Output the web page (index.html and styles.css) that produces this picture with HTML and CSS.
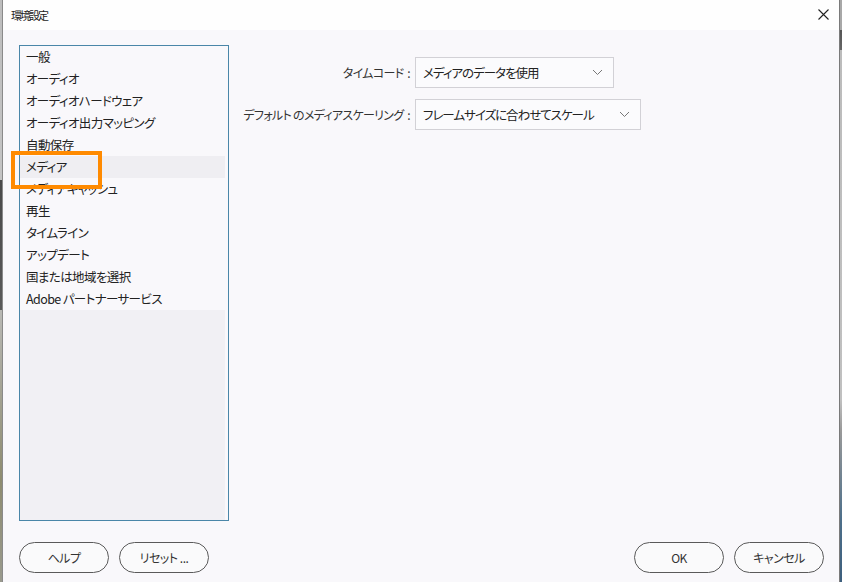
FILE: index.html
```html
<!DOCTYPE html>
<html lang="ja">
<head>
    <meta charset="UTF-8">
    <title>環境設定</title>
    <link rel="stylesheet" href="styles.css">
</head>
<body>
    <div class="desk left"></div>
    <div class="dialog">
        <div class="titlebar">
            <span class="title">環境設定</span>
            <svg class="close" width="11" height="11" viewBox="0 0 11 11">
                <path d="M0.5 0.5 L10.5 10.5 M10.5 0.5 L0.5 10.5" stroke="#222" stroke-width="1.1" fill="none"/>
            </svg>
        </div>
        <div class="main">
            <div class="listbox">
                <ul class="items">
                    <li>一般</li>
                    <li>オーディオ</li>
                    <li>オーディオハードウェア</li>
                    <li>オーディオ出力マッピング</li>
                    <li>自動保存</li>
                    <li class="selected">メディア</li>
                    <li>メディアキャッシュ</li>
                    <li>再生</li>
                    <li>タイムライン</li>
                    <li>アップデート</li>
                    <li>国または地域を選択</li>
                    <li>Adobe パートナーサービス</li>
                </ul>
                <div class="filler"></div>
            </div>
            <div class="form">
                <label>タイムコード&nbsp; :</label>
                <div class="select narrow">
                    <span>メディアのデータを使用</span>
                    <svg width="11" height="7" viewBox="0 0 11 7"><path d="M1 1 L5.5 5.5 L10 1" stroke="#777" fill="none"/></svg>
                </div>
                <label>デフォルト のメディアスケーリング&nbsp; :</label>
                <div class="select wide">
                    <span>フレームサイズに合わせてスケール</span>
                    <svg width="11" height="7" viewBox="0 0 11 7"><path d="M1 1 L5.5 5.5 L10 1" stroke="#777" fill="none"/></svg>
                </div>
            </div>
            <div class="highlight"></div>
        </div>
        <div class="footer">
            <div class="group">
                <button class="btn">ヘルプ</button>
                <button class="btn">リセット ...</button>
            </div>
            <div class="group">
                <button class="btn">OK</button>
                <button class="btn">キャンセル</button>
            </div>
        </div>
    </div>
    <div class="desk right"></div>
</body>
</html>
```

FILE: styles.css
```css
body {
    margin: 0;
    width: 842px;
    height: 582px;
    display: flex;
    font-family: "Noto Sans CJK JP", "Noto Sans", sans-serif;
    font-feature-settings: "palt";
    color: #222;
    overflow: hidden;
}

.desk {
    width: 2px;
    flex: none;
}

.desk.left {
    background: linear-gradient(to bottom, #bdbdbd 0, #c4c4c4 180px, #4a4a4a 180px, #5a5a5a 310px, #b9b9b5 310px, #8e8c70 480px, #9a9a8e 582px);
    border-right: 1px solid #8a8a8a;
}

.desk.right {
    background: linear-gradient(to bottom, #a8a8a8 0, #a8a8a8 30px, #555 30px, #666 50px, #bcbcbc 50px, #c0c0c0 400px, #9a9a9a 430px, #4d6f8a 520px, #3d5f7d 582px);
    border-left: 1px solid #7a7a7a;
}

.dialog {
    width: 836px;
    background: #f9f8fb;
    display: flex;
    flex-direction: column;
}

.titlebar {
    height: 30px;
    background: #fefefe;
    display: flex;
    align-items: center;
    justify-content: space-between;
    padding: 0 10px 0 8px;
}

.title {
    font-size: 11px;
    letter-spacing: -2px;
    margin-top: -1px;
}

.close {
    margin-top: -2px;
}

.main {
    position: relative;
    display: flex;
    padding: 15px 0 0 16px;
}

.listbox {
    width: 208px;
    height: 474px;
    border: 1px solid #4a86a8;
    display: flex;
    flex-direction: column;
    background: #f9f8fb;
}

.items {
    list-style: none;
    margin: 0;
    padding: 0;
}

.items li {
    height: 22px;
    line-height: 22px;
    font-size: 12.5px;
    letter-spacing: -0.6px;
    padding-left: 6px;
    margin-right: 3px;
    white-space: nowrap;
}

.items li.selected {
    background: #efeef2;
}

.filler {
    flex: 1;
    background: #f1f0f4;
    margin-right: 3px;
}

.form {
    display: grid;
    grid-template-columns: 168px auto;
    column-gap: 5px;
    row-gap: 11px;
    align-items: center;
    align-content: start;
    margin: 12px 0 0 13px;
}

.form label {
    font-size: 12px;
    letter-spacing: -0.7px;
    text-align: right;
    white-space: nowrap;
    color: #333;
}

.select {
    height: 31px;
    border: 1px solid #d2d1d6;
    background: #fbfbfd;
    display: flex;
    align-items: center;
    justify-content: space-between;
    padding: 0 10px 0 7px;
    font-size: 12.5px;
    letter-spacing: -1px;
    box-sizing: border-box;
    white-space: nowrap;
}

.select.narrow {
    width: 199px;
}

.select.wide {
    width: 226px;
}

.highlight {
    position: absolute;
    left: 8px;
    top: 121px;
    width: 83px;
    height: 30px;
    border: 4px solid #ff8a00;
}

.footer {
    display: flex;
    justify-content: space-between;
    padding: 21px 15px 0 16px;
}

.group {
    display: flex;
    gap: 10px;
}

.btn {
    width: 90px;
    height: 31px;
    border: 1px solid #5a5a5a;
    border-radius: 16px;
    background: #fafafb;
    font-family: inherit;
    font-feature-settings: "palt";
    font-size: 12px;
    letter-spacing: -0.5px;
    color: #333;
    padding: 0;
}
```
